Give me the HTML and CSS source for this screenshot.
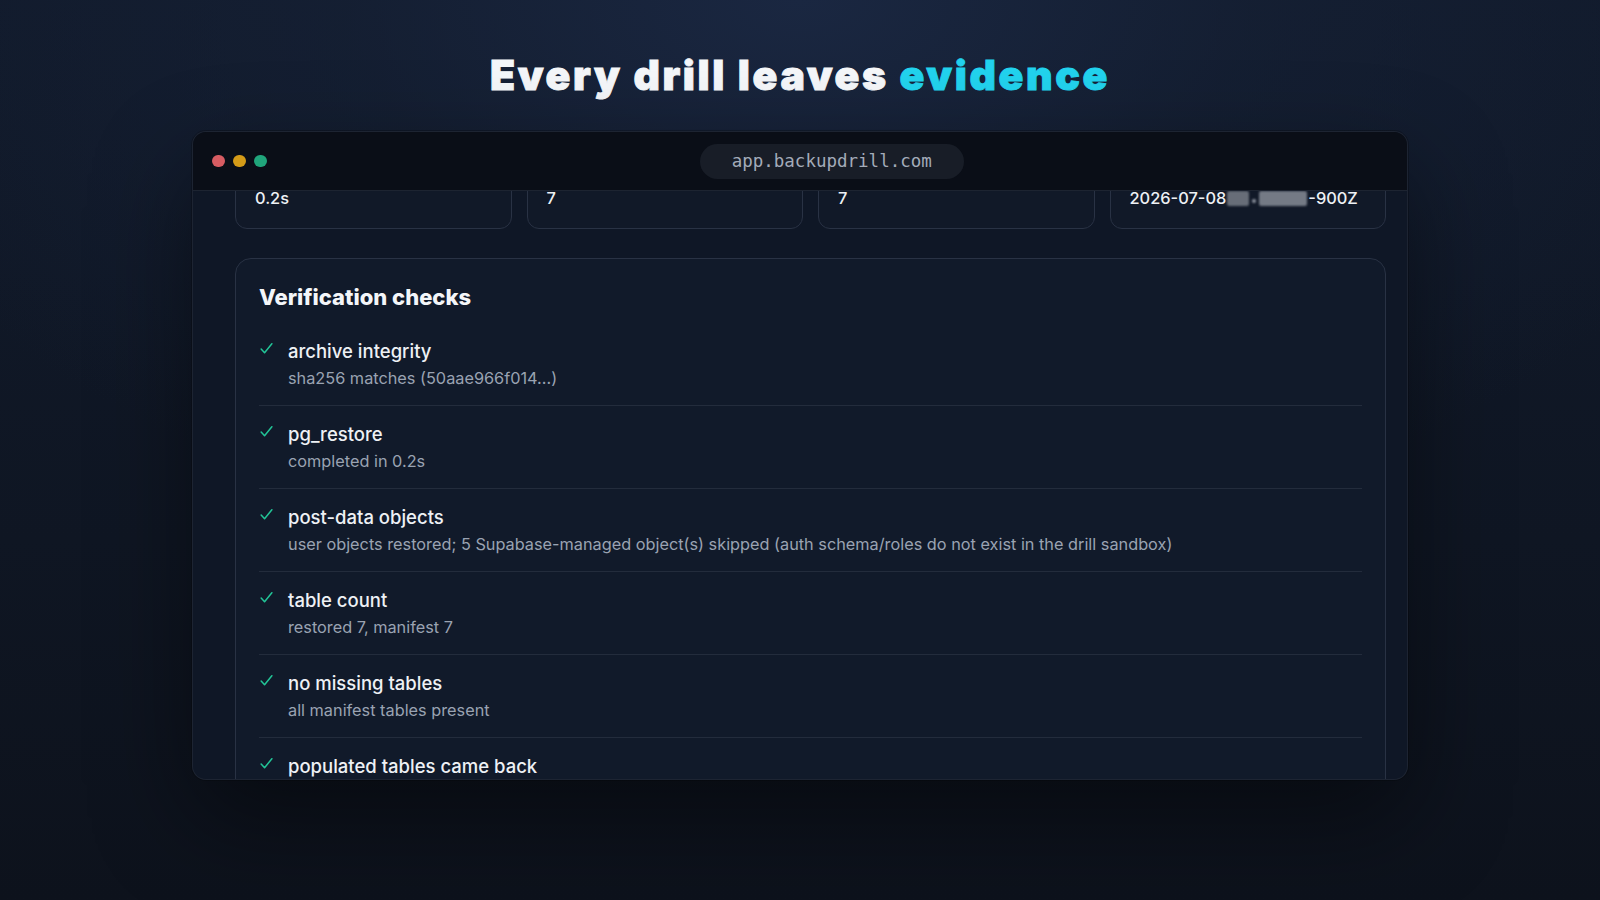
FILE: index.html
```html
<!DOCTYPE html>
<html lang="en">
<head>
<meta charset="utf-8">
<title>Every drill leaves evidence</title>
<link rel="stylesheet" href="styles.css">
</head>
<body>
<main class="stage">
  <h1 class="headline">Every drill leaves <span class="accent">evidence</span></h1>
  <section class="window">
    <header class="titlebar">
      <div class="dots">
        <span class="dot red"></span>
        <span class="dot yellow"></span>
        <span class="dot green"></span>
      </div>
      <div class="address">
        <div class="pill">app.backupdrill.com</div>
      </div>
    </header>
    <div class="viewport">
      <div class="scroll">
        <div class="stats">
          <div class="stat"><div class="stat-value">0.2s</div></div>
          <div class="stat"><div class="stat-value">7</div></div>
          <div class="stat"><div class="stat-value">7</div></div>
          <div class="stat"><div class="stat-value">2026-07-08<span class="redact"><span class="blk b1"></span><span class="blk b2"></span><span class="blk b3"></span></span>-900Z</div></div>
        </div>
        <div class="panel">
          <h2 class="panel-title">Verification checks</h2>
          <ul class="checks">
            <li class="check">
              <svg class="tick" viewBox="0 0 14 14"><path d="M2 7.5 L5.2 11 L12 2.5"/></svg>
              <div class="check-body"><div class="check-name">archive integrity</div><div class="check-detail">sha256 matches (50aae966f014...)</div></div>
            </li>
            <li class="check">
              <svg class="tick" viewBox="0 0 14 14"><path d="M2 7.5 L5.2 11 L12 2.5"/></svg>
              <div class="check-body"><div class="check-name">pg_restore</div><div class="check-detail">completed in 0.2s</div></div>
            </li>
            <li class="check">
              <svg class="tick" viewBox="0 0 14 14"><path d="M2 7.5 L5.2 11 L12 2.5"/></svg>
              <div class="check-body"><div class="check-name">post-data objects</div><div class="check-detail">user objects restored; 5 Supabase-managed object(s) skipped (auth schema/roles do not exist in the drill sandbox)</div></div>
            </li>
            <li class="check">
              <svg class="tick" viewBox="0 0 14 14"><path d="M2 7.5 L5.2 11 L12 2.5"/></svg>
              <div class="check-body"><div class="check-name">table count</div><div class="check-detail">restored 7, manifest 7</div></div>
            </li>
            <li class="check">
              <svg class="tick" viewBox="0 0 14 14"><path d="M2 7.5 L5.2 11 L12 2.5"/></svg>
              <div class="check-body"><div class="check-name">no missing tables</div><div class="check-detail">all manifest tables present</div></div>
            </li>
            <li class="check">
              <svg class="tick" viewBox="0 0 14 14"><path d="M2 7.5 L5.2 11 L12 2.5"/></svg>
              <div class="check-body"><div class="check-name">populated tables came back</div></div>
            </li>
          </ul>
        </div>
      </div>
    </div>
  </section>
</main>
</body>
</html>
```

FILE: styles.css
```css
* { box-sizing: border-box; }
html, body { margin: 0; padding: 0; }
body {
  width: 1600px;
  height: 900px;
  overflow: hidden;
  font-family: Inter, "Noto Sans", sans-serif;
  color: #e6ebf2;
  background:
    radial-gradient(ellipse 1000px 560px at 50% 0%, #1a2741 0%, rgba(22,33,54,0.65) 45%, rgba(14,20,33,0) 100%),
    linear-gradient(180deg, #111a2b 0%, #0f1623 60%, #0d121c 100%);
}
.stage {
  display: flex;
  flex-direction: column;
  align-items: center;
  padding-top: 51px;
}
.headline {
  margin: 0;
  font-family: Inter, sans-serif;
  font-weight: 900;
  font-size: 41px;
  line-height: 48px;
  letter-spacing: 2.6px;
  -webkit-text-stroke: 0.9px currentColor;
  color: #f5f7fa;
}
.accent { color: #22d3ee; }

.window {
  margin-top: 32px;
  width: 1216px;
  height: 649px;
  border-radius: 14px;
  border: 1px solid rgba(255,255,255,0.06);
  background: #0f1726;
  overflow: hidden;
  display: flex;
  flex-direction: column;
  box-shadow: 0 40px 100px rgba(0,0,0,0.45), 0 0 0 1px rgba(0,0,0,0.2);
}
.titlebar {
  flex: 0 0 59px;
  display: flex;
  align-items: center;
  padding: 0 10px 0 19px;
  background: #0a0e17;
  border-bottom: 1px solid #1d2431;
}
.dots { display: flex; gap: 8.5px; }
.dot { width: 12.5px; height: 12.5px; border-radius: 50%; }
.red { background: #d75c62; }
.yellow { background: #d49b18; }
.green { background: #20a57b; }
.address { flex: 1; display: flex; justify-content: center; }
.pill {
  height: 35px;
  padding: 0 32px;
  border-radius: 18px;
  background: #181d27;
  color: #a3abb9;
  font-family: "DejaVu Sans Mono", "Liberation Mono", monospace;
  font-size: 17.5px;
  line-height: 35px;
}

.viewport {
  flex: 1;
  overflow: hidden;
}
.scroll {
  margin-top: -52px;
  padding: 0 21px 0 42px;
}
.stats {
  display: grid;
  grid-template-columns: repeat(4, minmax(0, 1fr));
  gap: 15px;
}
.stat {
  border: 1px solid #293244;
  border-radius: 12px;
  padding: 45px 19px 19px 19px;
  background: rgba(255,255,255,0.012);
}
.stat-value {
  font-size: 16.4px;
  line-height: 24px;
  font-weight: 500;
  color: #eef1f5;
  white-space: nowrap;
  padding-top: 1px;
  margin-bottom: -1px;
}
.redact { display: inline-flex; align-items: center; gap: 3px; margin: 0 1px 0 1px; vertical-align: -2px; height: 18px; }
.blk { display: inline-block; height: 15px; background: #676d78; filter: blur(1.3px); border-radius: 2px; }
.b1 { width: 22px; }
.b2 { width: 4px; height: 4px; margin-top: 5px; background: #9097a2; }
.b3 { width: 48px; background: #747a85; }

.panel {
  margin-top: 29px;
  border: 1px solid #293244;
  border-radius: 16px;
  padding: 24px 23px 0 23px;
  background: #111a2a;
}
.panel-title {
  margin: 0 0 12px 0;
  font-size: 22px;
  line-height: 28px;
  font-weight: 800;
  color: #f4f6f9;
}
.checks { list-style: none; margin: 0; padding: 0; }
.check {
  display: flex;
  align-items: flex-start;
  gap: 14px;
  padding: 16px 0;
  border-bottom: 1px solid #232c3c;
}
.tick {
  flex: 0 0 15px;
  width: 15px;
  height: 15px;
  margin-top: 2px;
  fill: none;
  stroke: #22c597;
  stroke-width: 1.4;
  stroke-linecap: round;
  stroke-linejoin: round;
}
.check-name {
  font-size: 18.5px;
  line-height: 24px;
  font-weight: 500;
  color: #eef1f5;
}
.check-detail {
  margin-top: 4px;
  font-size: 16.3px;
  line-height: 22px;
  color: #9aa3b2;
}
```
